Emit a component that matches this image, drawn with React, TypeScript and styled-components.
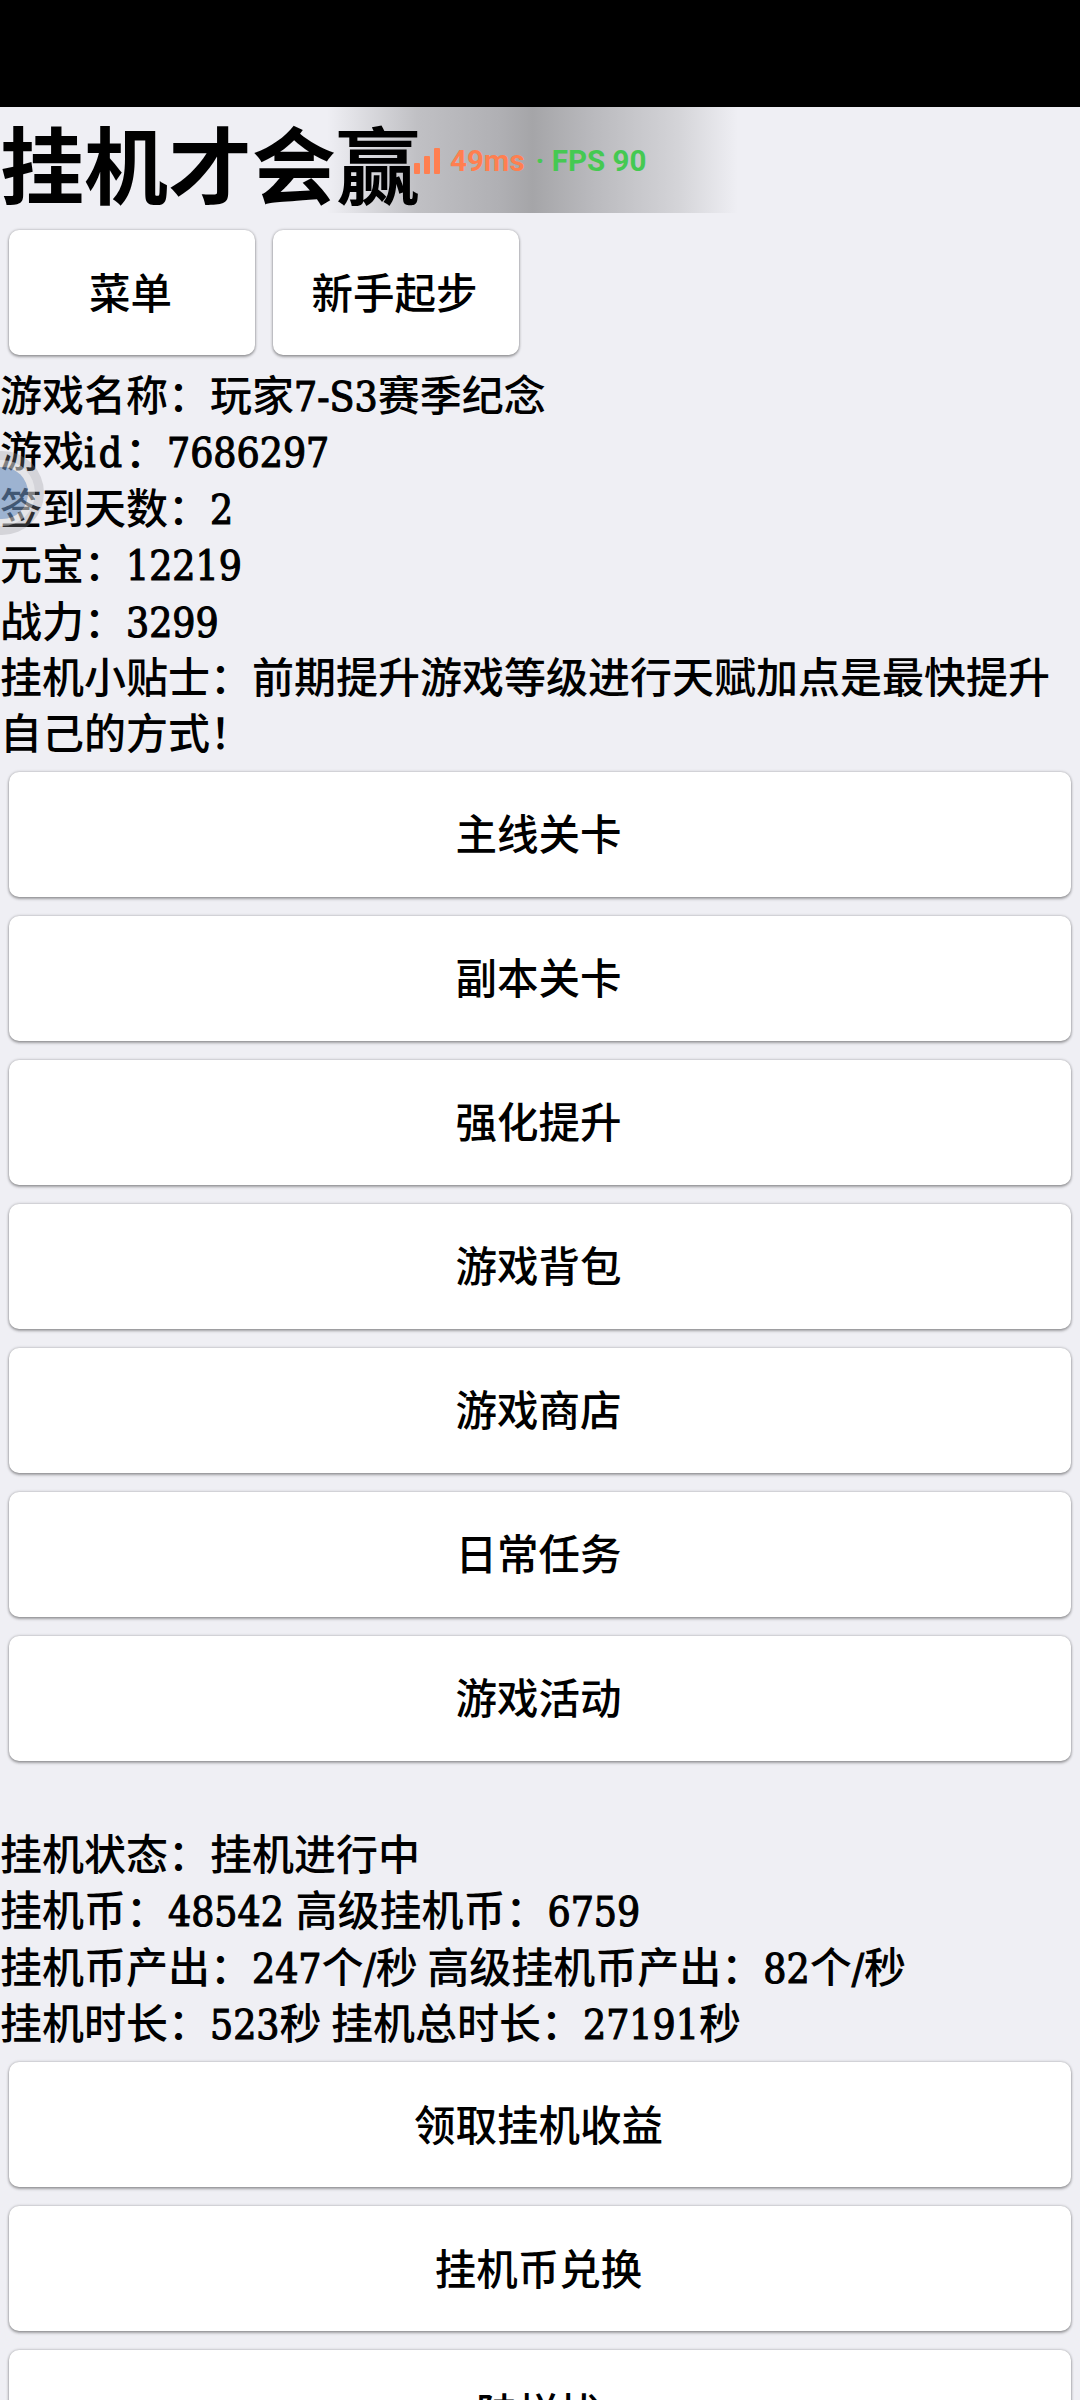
import styled, { createGlobalStyle } from 'styled-components';

const GlobalStyle = createGlobalStyle`
  html, body {
    margin: 0;
    padding: 0;
    height: 2400px;
    overflow: hidden;
    background: #efeff4;
  }
  body {
    font-family: "Noto Sans CJK SC", sans-serif;
    color: #000;
  }
`;

const Page = styled.div`
  position: relative;
  width: 1080px;
  height: 2400px;
  overflow: hidden;
`;
const StatusBar = styled.div`
  height: 107px;
  background: #000;
`;
const Title = styled.h1`
  position: relative;
  z-index: 1;
  margin: 0;
  height: 106px;
  font-size: 84px;
  font-weight: 700;
  line-height: 109px;
`;
const NetOverlay = styled.div`
  position: absolute;
  top: 107px;
  left: 310px;
  width: 428px;
  height: 106px;
  display: flex;
  align-items: center;
  gap: 8px;
  padding: 2px 0 0 104px;
  box-sizing: border-box;
  background: linear-gradient(
    90deg,
    #efeff4 4%,
    #c0c0c4 25%,
    #b0b0b4 44%,
    #a5a5a8 52%,
    #b8b8bc 65%,
    #d4d4d8 86%,
    #efeff4 100%
  );
  font-family: Roboto, sans-serif;
  font-size: 29.5px;
  font-weight: 700;
`;
const Ping = styled.span`
  color: #ff7f50;
`;
const Fps = styled.span`
  color: #45c952;
  margin-left: 3px;
`;
const TopRow = styled.div`
  display: flex;
  gap: 18px;
  padding: 17px 9px 10px;
`;
const Button = styled.div<{ $small?: boolean }>`
  flex: 0 0 auto;
  box-sizing: border-box;
  width: ${(p) => (p.$small ? '246px' : 'auto')};
  height: 125px;
  padding: 0 3px 4px 0;
  display: flex;
  align-items: center;
  justify-content: center;
  background: #fff;
  border-radius: 10px;
  box-shadow: 0 2px 3px rgba(0, 0, 0, 0.3), 0 0 3px rgba(0, 0, 0, 0.3);
  font-size: 41.5px;
  font-weight: 500;
`;
const ButtonList = styled.div`
  display: flex;
  flex-direction: column;
  gap: 19px;
  padding: 9px 9px 0;
`;
const Info = styled.div`
  margin-bottom: 3px;
  font-size: 42px;
  font-weight: 500;
  line-height: 56.4px;
`;
const Line = styled.div``;
// latin runs of the info text are set in a serif, cjk stays sans
const Num = styled.span<{ $spaced?: boolean }>`
  font-family: "DejaVu Serif Condensed", serif;
  font-size: 40.5px;
  font-weight: 400;
  line-height: 1;
  letter-spacing: ${(p) => (p.$spaced ? '3px' : '0')};
  -webkit-text-stroke: 1.1px #000;
`;
const Ball = styled.div`
  position: absolute;
  left: -40px;
  top: 451px;
  width: 84px;
  height: 84px;
  display: flex;
  align-items: center;
  justify-content: center;
  border-radius: 50%;
  background: rgba(150, 150, 155, 0.3);
`;
const BallCore = styled.div`
  width: 52px;
  height: 52px;
  border-radius: 50%;
  background: rgba(90, 140, 200, 0.45);
  box-shadow: 0 0 0 7px rgba(255, 255, 255, 0.4);
`;
const StatusInfo = styled(Info)`
  margin-top: 63px;
  margin-bottom: 4px;
`;

const mainActions = ['主线关卡', '副本关卡', '强化提升', '游戏背包', '游戏商店', '日常任务', '游戏活动'];
const idleActions = ['领取挂机收益', '挂机币兑换', '陆样扰'];

const App = () => {
  return (
    <Page>
      <GlobalStyle />
      <StatusBar />
      <Title>挂机才会赢</Title>
      <NetOverlay>
        <svg width="28" height="26" viewBox="0 0 28 26">
          <rect x="0" y="15" width="6" height="11" rx="1" fill="#ff7f50" />
          <rect x="10" y="8" width="6" height="18" rx="1" fill="#ff7f50" />
          <rect x="20" y="0" width="6" height="26" rx="1" fill="#ff7f50" />
        </svg>
        <Ping>49ms</Ping>
        <Fps>·&nbsp;FPS 90</Fps>
      </NetOverlay>
      <TopRow>
        <Button $small>菜单</Button>
        <Button $small>新手起步</Button>
      </TopRow>
      <Info>
        <Line>游戏名称：玩家<Num>7-S3</Num>赛季纪念</Line>
        <Line>游戏<Num $spaced>id</Num>：<Num>7686297</Num></Line>
        <Line>签到天数：<Num>2</Num></Line>
        <Line>元宝：<Num>12219</Num></Line>
        <Line>战力：<Num>3299</Num></Line>
        <Line>挂机小贴士：前期提升游戏等级进行天赋加点是最快提升自己的方式！</Line>
      </Info>
      <ButtonList>
        {mainActions.map((a) => (
          <Button key={a}>{a}</Button>
        ))}
      </ButtonList>
      <StatusInfo>
        <Line>挂机状态：挂机进行中</Line>
        <Line>挂机币：<Num>48542 </Num>高级挂机币：<Num>6759</Num></Line>
        <Line>挂机币产出：<Num>247</Num>个<Num>/</Num>秒 高级挂机币产出：<Num>82</Num>个<Num>/</Num>秒</Line>
        <Line>挂机时长：<Num>523</Num>秒 挂机总时长：<Num>27191</Num>秒</Line>
      </StatusInfo>
      <ButtonList>
        {idleActions.map((a) => (
          <Button key={a}>{a}</Button>
        ))}
      </ButtonList>
      <Ball>
        <BallCore />
      </Ball>
    </Page>
  );
};

export default App;
